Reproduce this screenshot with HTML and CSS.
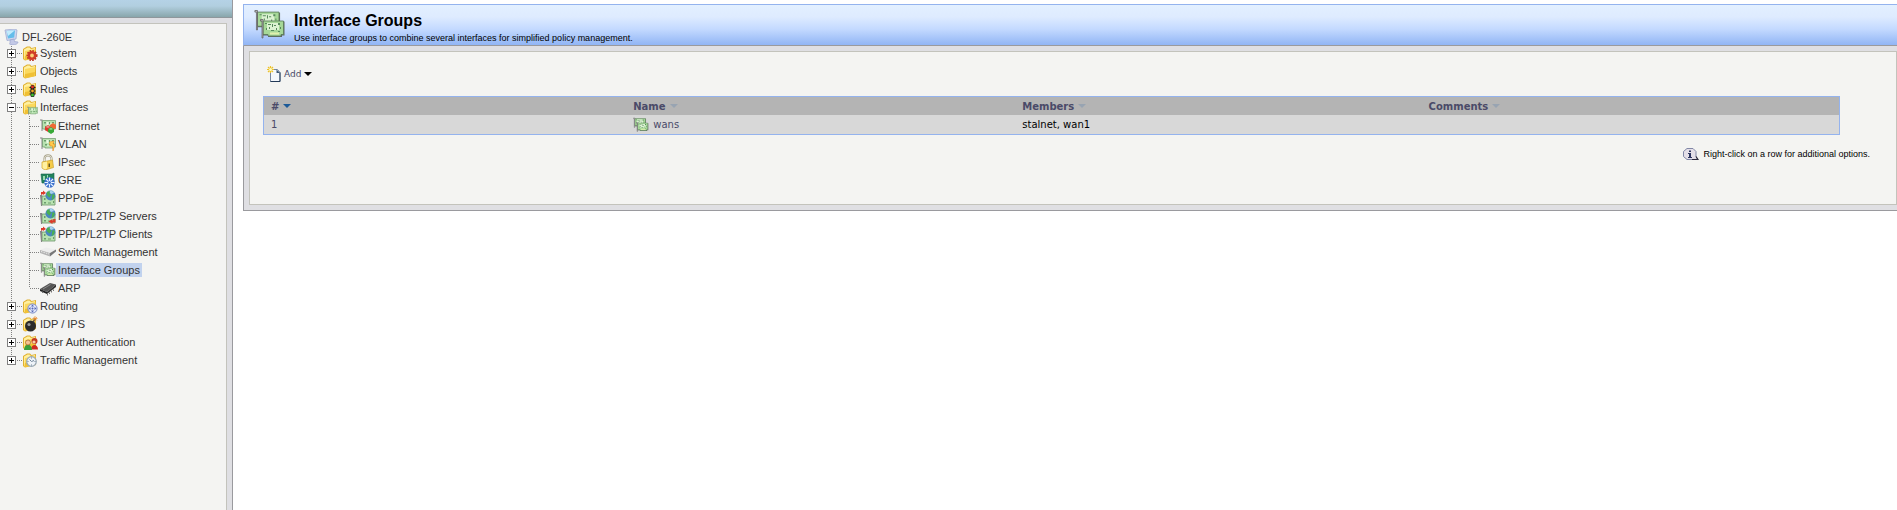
FILE: index.html
```html
<!DOCTYPE html>
<html lang="en">
<head>
    <meta charset="UTF-8">
    <meta name="viewport" content="width=device-width, initial-scale=1.0">
    <title>DFL-260E - Interface Groups</title>
    <link rel="stylesheet" href="styles.css">
</head>
<body>
    <!-- icon sprite -->
    <svg class="sprite" aria-hidden="true">
        <defs>
            <symbol id="folder" viewBox="0 0 16 16">
                <path d="M1 4l4-2.500h3L9.500 3l4.500-1v11L3 15.500 1 14z" fill="#e0b030"/>
                <path d="M2 4.500l3.500-2h2L9 4l4-1v9.500L2 14z" fill="#fff0a0"/>
                <path d="M3 6l10.500-2L12.500 13 2.500 15z" fill="#fbd95e"/>
                <path d="M3 11l10-2-.5 4L2.500 15z" fill="#f0c034"/>
            </symbol>
            <symbol id="card" viewBox="0 0 16 12">
                <path d="M0 0.500h2.500V12H1.500V1.500H0z" fill="#858585"/>
                <path d="M2.500 1.500h13v8.500H13v1H5v-1H2.500z" fill="#b8e2b0" stroke="#6a9468" stroke-width="0.700"/>
                <path d="M4 3h2v1.500H4zM9 3h1v2H9zM12 3h2v1h-2zM5 7h2v1.500H5zM9 7h3v1H9zM13 6h1v2h-1z" fill="#6a9c6c"/>
                <path d="M6.500 3h2v3h-2zM10.500 4h1v2h-1zM7.500 8h1v1h-1z" fill="#ecf8e6"/>
            </symbol>
            <!-- larger card, for the stacked groups icon -->
            <symbol id="board" viewBox="0 0 26 20">
                <path d="M3 2.500h21.500v14H22V18H8v-1.500H3z" fill="#606860"/>
                <path d="M3 2h20.500v13.500H21V17H8v-1.500H3z" fill="#a6d898" stroke="#587858" stroke-width="0.800"/>
                <path d="M7 4h12v7H7z" fill="#dcf2d2"/>
                <path d="M5 4h2v1H5zM8 5h3v1H8zM9 8h1v2H9zM12 5h1v3h-1zM14 6h2v1h-2zM18 4h2v2h-2zM6 9h1v2H6zM11 11h3v1h-3zM16 9h1v2h-1zM18 12h2v1h-2zM20 8h1v2h-1z" fill="#588a5c"/>
                <path d="M10 13.500h9v2h-9z" fill="#e0f0ae"/>
                <path d="M0.500 0.500H3v18.500H2V2H0.500z" fill="#bdbdbd" stroke="#5c5c5c" stroke-width="0.700"/>
            </symbol>
            <symbol id="groups" viewBox="0 0 32 32">
                <use href="#board" x="0" y="1" width="28" height="21"/>
                <use href="#board" x="6" y="10" width="26" height="20"/>
            </symbol>
            <symbol id="device" viewBox="0 0 16 16">
                <path d="M1 1l10-1 2 1-1 9-9 1.500z" fill="#cfd6ee" stroke="#9aa6cf" stroke-width="0.700"/>
                <path d="M2.500 2L11 1.200l-.8 7.300L4 9.500z" fill="#64bdea"/>
                <path d="M2.500 2L11 1.200 4 7z" fill="#c2ebfc"/>
                <path d="M6 11l4-1 .5 2.500L14 13c0 2-3 3-6 3-2 0-3-1-2-2z" fill="#c3c9e6" stroke="#949dc7" stroke-width="0.600"/>
            </symbol>
            <symbol id="system" viewBox="0 0 16 16">
                <use href="#folder" width="16" height="16"/>
                <circle cx="10" cy="10.500" r="4.800" fill="none" stroke="#b82c1e" stroke-width="1.500" stroke-dasharray="1.600 1.200"/>
                <circle cx="10" cy="10.500" r="3.200" fill="#fbd075" stroke="#d03c28" stroke-width="2.600"/>
            </symbol>
            <symbol id="rules" viewBox="0 0 16 16">
                <use href="#folder" width="16" height="16"/>
                <path d="M7.500 6.500h6M7.500 10h6M7.500 13h6" stroke="#222" stroke-width="1.200"/>
                <rect x="8.500" y="4" width="4" height="12" rx="1.500" fill="#202020"/>
                <circle cx="10.500" cy="6" r="1.400" fill="#f03020"/>
                <circle cx="10.500" cy="10" r="1.400" fill="#f2a51e"/>
                <circle cx="10.500" cy="14" r="1.400" fill="#39c12c"/>
            </symbol>
            <symbol id="interfaces" viewBox="0 0 16 16">
                <use href="#folder" width="16" height="16"/>
                <use href="#card" x="5" y="7" width="11" height="9"/>
            </symbol>
            <symbol id="ethernet" viewBox="0 0 16 16">
                <use href="#card" y="1" width="16" height="12"/>
                <path d="M5 9l3-2 3 2v3l-3 2-3-2z" fill="#e2382b"/>
                <path d="M10 7l3-2 3 2v3l-3 2-3-2z" fill="#ee6a35"/>
                <path d="M8 11l3-2 3 2v3l-3 2-3-2z" fill="#37a936"/>
                <path d="M5.500 9L8 7.500 10 9 8 10zM8.500 11L11 9.800l2 1.200-2 1z" fill="#fff" opacity="0.450"/>
            </symbol>
            <symbol id="vlan" viewBox="0 0 16 16">
                <use href="#card" y="1" width="16" height="12"/>
                <path d="M9.500 6l4.500-1-1 3h2l-2 7-.5-5H10z" fill="#ffcb4a" stroke="#e28a20" stroke-width="0.600"/>
            </symbol>
            <symbol id="lock" viewBox="0 0 16 16">
                <path d="M4.500 8V4.500C5 0.500 10.500 0.500 11.500 4v4" fill="none" stroke="#a9a48c" stroke-width="2.200"/>
                <path d="M4.500 8V4.500C5 0.500 10.500 0.500 11.500 4v4" fill="none" stroke="#e6e4da" stroke-width="0.900"/>
                <path d="M2 8l10.500-2 1 7.500L5 16l-3-2z" fill="#f6cb48" stroke="#c99d28" stroke-width="0.700"/>
                <path d="M2.500 8.500L7 7.500v7l-2 1-2.500-1.500z" fill="#fff0a0"/>
                <path d="M8.500 9.500H10V13H8.500z" fill="#69551c"/>
            </symbol>
            <symbol id="gre" viewBox="0 0 16 16">
                <path d="M1 2h11l2-1v9h-2v1H2z" fill="#23835a" stroke="#15624b" stroke-width="0.600"/>
                <path d="M3 4h2v4H3zM7 3h1v3H7z" fill="#9ad9b0"/>
                <circle cx="9.500" cy="10.500" r="5.200" fill="#3d72cc"/>
                <path d="M9.500 5.500v10M4.500 10.500h10M6 7l7 7M13 7l-7 7" stroke="#e7f0ff" stroke-width="1.100"/>
                <circle cx="9.500" cy="10.500" r="1.500" fill="#3d72cc"/>
            </symbol>
            <symbol id="tunnel" viewBox="0 0 16 16">
                <path d="M2 6h13v9H2z" fill="#b8e2b0" stroke="#6a9468" stroke-width="0.800"/>
                <path d="M0 5h2v11H1z" fill="#858585"/>
                <path d="M4 12h2v1.500H4zM8 12.500h3v1H8zM4 8h1.500v2H4zM13 11h1v2h-1z" fill="#6a9c6c"/>
                <circle cx="10.500" cy="5.500" r="5" fill="#4a86c0"/>
                <path d="M8 1c3-1 5 0 6 2l-3 1z" fill="#a8d2ee"/>
                <path d="M7 2l3-1-.5 2.500 2 1-2 3-3-2.500zM12.500 4l2.500 1-1.500 4-2 1z" fill="#4aaf52"/>
            </symbol>
            <symbol id="pppoe" viewBox="0 0 16 16">
                <use href="#tunnel" width="16" height="16"/>
                <path d="M1 5V2h2V0.500L6 3 3 5V4z" fill="#dd3b2b"/>
            </symbol>
            <symbol id="l2tp-server" viewBox="0 0 16 16">
                <use href="#tunnel" width="16" height="16"/>
                <path d="M15.500 11v3.500h-3V16l-4-2.500 4-2.500v1.500h1V11z" fill="#dd3b2b"/>
            </symbol>
            <symbol id="switch" viewBox="0 0 16 16">
                <path d="M0 6l6-2.500 10 2L10 9z" fill="#ededed"/>
                <path d="M0 6l10 3v3.500L0 9z" fill="#b2b2b2"/>
                <path d="M10 9l6-3.500v2L10 12.500z" fill="#777"/>
                <path d="M1 7.500l8 2.500" stroke="#f8f8f8" stroke-width="0.800" stroke-dasharray="1.500 1"/>
            </symbol>
            <symbol id="chip" viewBox="0 0 16 16">
                <path d="M0 9l10-6 6 1.500L7 12z" fill="#555"/>
                <path d="M0 9l7 3v2L0 11z" fill="#222"/>
                <path d="M7 12l9-7.500V7L7 14z" fill="#333"/>
                <path d="M7.500 14v1.500M9.500 12.500V14M11.500 11v1.500M13.500 9.500V11M2.500 11.500V13" stroke="#777"/>
                <path d="M3 9l7.500-4.500" stroke="#999" stroke-width="0.800"/>
            </symbol>
            <symbol id="routing" viewBox="0 0 16 16">
                <use href="#folder" width="16" height="16"/>
                <circle cx="10.500" cy="10.500" r="4.600" fill="#dfe5fa" stroke="#7c8cc8"/>
                <path d="M10.500 6.500l1.500 2H9zM10.500 14.500l1.500-2H9zM6.500 10.500l2-1.500v3zM14.500 10.500l-2-1.500v3z" fill="#5366b4"/>
                <circle cx="10.500" cy="10.500" r="1" fill="#5366b4"/>
            </symbol>
            <symbol id="idp" viewBox="0 0 16 16">
                <use href="#folder" width="16" height="16"/>
                <circle cx="8.500" cy="10" r="5.500" fill="#2b2b2b"/>
                <circle cx="7" cy="8.500" r="1.600" fill="#999"/>
                <path d="M11 6l2-3" stroke="#444" stroke-width="1.500"/>
                <path d="M13 0v5M10.500 2.500h5M11.500 1l3.500 3.500M15 1l-3.500 3.500" stroke="#ea8a2e" stroke-width="0.700"/>
            </symbol>
            <symbol id="users" viewBox="0 0 16 16">
                <use href="#folder" width="16" height="16"/>
                <path d="M9 15.500c0-6 7-6 7 0z" fill="#cf2a22"/>
                <circle cx="12.500" cy="7" r="3" fill="#c33824"/>
                <circle cx="12" cy="8" r="1.600" fill="#f7cfa6"/>
                <path d="M2 16c0-7 8-7 8 0z" fill="#39a03a"/>
                <circle cx="6" cy="8.500" r="2.500" fill="#f4c391" stroke="#a0622c" stroke-width="0.700"/>
            </symbol>
            <symbol id="traffic" viewBox="0 0 16 16">
                <use href="#folder" width="16" height="16"/>
                <circle cx="9.500" cy="9.500" r="4.800" fill="#eef3f8" stroke="#98a8b4" stroke-width="1.200"/>
                <path d="M7.500 7.500l2 2 2.500-1M9.500 5.500v1M9.500 12.500v1M5.500 9.500h1M12.500 9.500h1" fill="none" stroke="#647a90" stroke-width="0.900"/>
            </symbol>
            <symbol id="new-page" viewBox="0 0 14 16">
                <path d="M3.500 3.500h7l2.500 3v9H3.500z" fill="#f4f7fc" stroke="#7888a0"/>
                <path d="M9.500 3.500V7H13z" fill="#3d5878"/>
                <path d="M13 6.500v9H3.500" fill="none" stroke="#233a58"/>
                <path d="M3.500 0v7M0 3.500h7M1 1l5 5M6 1L1 6" stroke="#edc22c" stroke-width="1.200"/>
                <circle cx="3.500" cy="3.500" r="1.500" fill="#fffbc0"/>
            </symbol>
            <symbol id="hint" viewBox="0 0 16 13">
                <path d="M4 0.500h6l3 3v5l1.500 3H4l-3.500-3v-5z" fill="#e4dfe8" stroke="#8187a6"/>
                <path d="M9 11.500h6L13 8.500" fill="none" stroke="#2d2a3c" stroke-width="1.200"/>
                <path d="M6 2.500h2V4H6zM5 5h3v4h1v1H5V9h1V6H5z" fill="#2c3560"/>
            </symbol>
        </defs>
    </svg>

    <div class="page">
        <aside class="sidebar">
            <div class="topbar"></div>
            <nav class="nav">
                <a class="root" href="#"><svg class="icon"><use href="#device"/></svg><span class="label">DFL-260E</span></a>
                <ul class="tree">
                    <li>
                        <div class="row"><button class="toggle" aria-label="Expand System"></button><span class="dots"></span><a href="#"><svg class="icon"><use href="#system"/></svg><span class="label">System</span></a></div>
                    </li>
                    <li>
                        <div class="row"><button class="toggle" aria-label="Expand Objects"></button><span class="dots"></span><a href="#"><svg class="icon"><use href="#folder"/></svg><span class="label">Objects</span></a></div>
                    </li>
                    <li>
                        <div class="row"><button class="toggle" aria-label="Expand Rules"></button><span class="dots"></span><a href="#"><svg class="icon"><use href="#rules"/></svg><span class="label">Rules</span></a></div>
                    </li>
                    <li>
                        <div class="row"><button class="toggle open" aria-label="Collapse Interfaces"></button><span class="dots"></span><a href="#"><svg class="icon"><use href="#interfaces"/></svg><span class="label">Interfaces</span></a></div>
                        <ul class="subtree">
                            <li class="row"><span class="dots"></span><a href="#"><svg class="icon"><use href="#ethernet"/></svg><span class="label">Ethernet</span></a></li>
                            <li class="row"><span class="dots"></span><a href="#"><svg class="icon"><use href="#vlan"/></svg><span class="label">VLAN</span></a></li>
                            <li class="row"><span class="dots"></span><a href="#"><svg class="icon"><use href="#lock"/></svg><span class="label">IPsec</span></a></li>
                            <li class="row"><span class="dots"></span><a href="#"><svg class="icon"><use href="#gre"/></svg><span class="label">GRE</span></a></li>
                            <li class="row"><span class="dots"></span><a href="#"><svg class="icon"><use href="#pppoe"/></svg><span class="label">PPPoE</span></a></li>
                            <li class="row"><span class="dots"></span><a href="#"><svg class="icon"><use href="#l2tp-server"/></svg><span class="label">PPTP/L2TP Servers</span></a></li>
                            <li class="row"><span class="dots"></span><a href="#"><svg class="icon"><use href="#pppoe"/></svg><span class="label">PPTP/L2TP Clients</span></a></li>
                            <li class="row"><span class="dots"></span><a href="#"><svg class="icon"><use href="#switch"/></svg><span class="label">Switch Management</span></a></li>
                            <li class="row"><span class="dots"></span><a href="#"><svg class="icon"><use href="#groups"/></svg><span class="label selected">Interface Groups</span></a></li>
                            <li class="row"><span class="dots"></span><a href="#"><svg class="icon"><use href="#chip"/></svg><span class="label">ARP</span></a></li>
                        </ul>
                    </li>
                    <li>
                        <div class="row"><button class="toggle" aria-label="Expand Routing"></button><span class="dots"></span><a href="#"><svg class="icon"><use href="#routing"/></svg><span class="label">Routing</span></a></div>
                    </li>
                    <li>
                        <div class="row"><button class="toggle" aria-label="Expand IDP / IPS"></button><span class="dots"></span><a href="#"><svg class="icon"><use href="#idp"/></svg><span class="label">IDP / IPS</span></a></div>
                    </li>
                    <li>
                        <div class="row"><button class="toggle" aria-label="Expand User Authentication"></button><span class="dots"></span><a href="#"><svg class="icon"><use href="#users"/></svg><span class="label">User Authentication</span></a></div>
                    </li>
                    <li>
                        <div class="row"><button class="toggle" aria-label="Expand Traffic Management"></button><span class="dots"></span><a href="#"><svg class="icon"><use href="#traffic"/></svg><span class="label">Traffic Management</span></a></div>
                    </li>
                </ul>
            </nav>
        </aside>

        <main class="main">
            <header class="header">
                <svg class="header-icon"><use href="#groups"/></svg>
                <div>
                    <h1>Interface Groups</h1>
                    <p>Use interface groups to combine several interfaces for simplified policy management.</p>
                </div>
            </header>
            <div class="frame">
                <section class="panel">
                    <button class="add"><svg class="add-icon"><use href="#new-page"/></svg>Add<span class="arrow"></span></button>
                    <table class="grid">
                        <thead>
                            <tr>
                                <th class="col-index"><button class="sort active">#</button></th>
                                <th class="col-name"><button class="sort">Name</button></th>
                                <th class="col-members"><button class="sort">Members</button></th>
                                <th><button class="sort">Comments</button></th>
                            </tr>
                        </thead>
                        <tbody>
                            <tr>
                                <td>1</td>
                                <td><a class="item" href="#"><svg class="icon"><use href="#groups"/></svg>wans</a></td>
                                <td class="members">stalnet, wan1</td>
                                <td></td>
                            </tr>
                        </tbody>
                    </table>
                    <p class="hint"><svg class="hint-icon"><use href="#hint"/></svg>Right-click on a row for additional options.</p>
                </section>
            </div>
        </main>
    </div>
</body>
</html>
```

FILE: styles.css
```css
* {
    box-sizing: border-box;
}

body {
    margin: 0;
    background: #fff;
    color: #333;
    font-family: "Liberation Sans", Arial, sans-serif;
    font-size: 11px;
}

a {
    color: inherit;
    text-decoration: none;
}

button {
    padding: 0;
    border: none;
    background: none;
    color: inherit;
    font: inherit;
    cursor: pointer;
}

.sprite {
    display: none;
}

.icon {
    flex: none;
    width: 16px;
    height: 16px;
}

.page {
    display: flex;
    min-height: 100vh;
}

/* sidebar */
.sidebar {
    display: flex;
    flex-direction: column;
    flex: none;
    width: 233px;
    padding-right: 5px;
    border-right: 1px solid #9a9a9e;
    background: #dfdfe3;
}

.topbar {
    height: 18px;
    margin: 0 -5px 5px 0;
    border-bottom: 1px solid #8f979b;
    background: linear-gradient(#b5d2e6 0%, #b2cfe0 35%, #88a6ab 100%);
}

.nav {
    flex: 1;
    padding-top: 5px;
    border-top: 1px solid #c3c3bc;
    border-right: 1px solid #c3c3bc;
    background: #f4f4f2;
}

.root {
    display: flex;
    align-items: center;
    height: 15px;
    padding-left: 4px;
}

.tree,
.subtree {
    margin: 0;
    padding: 0;
    list-style: none;
    background: repeating-linear-gradient(#808080 0 1px, transparent 1px 2px) no-repeat;
}

.tree {
    background-position: 11px 0;
    background-size: 1px calc(100% - 9px);
}

.subtree {
    padding: 1px 0 0 29px;
    background-position: 29px 0;
    background-size: 1px calc(100% - 9px);
}

.row {
    display: flex;
    align-items: center;
    height: 18px;
}

.tree > li > .row {
    padding-left: 7px;
}

.row a {
    display: flex;
    align-items: center;
}

.dots {
    width: 6px;
    height: 1px;
    background: repeating-linear-gradient(to right, transparent 0 1px, #808080 1px 2px);
}

.subtree .dots {
    width: 11px;
}

.toggle {
    width: 9px;
    height: 9px;
    border: 1px solid #808080;
    background:
        linear-gradient(#000, #000) center / 5px 1px no-repeat,
        linear-gradient(#000, #000) center / 1px 5px no-repeat,
        #fff;
}

.toggle.open {
    background: linear-gradient(#000, #000) center / 5px 1px no-repeat, #fff;
}

.label {
    padding: 0 2px;
    line-height: 14px;
}

.selected {
    background: #c1d2ee;
}

/* content */
.main {
    flex: 1;
    align-self: flex-start;
    margin: 4px 0 0 10px;
    border-bottom: 1px solid #9a9a9e;
    background: #dfdfe3;
}

.header {
    display: flex;
    gap: 8px;
    height: 42px;
    padding: 4px 10px 0;
    border-top: 1px solid #94b3ee;
    border-left: 1px solid #94b3ee;
    border-bottom: 1px solid #9a9a9e;
    background: linear-gradient(#e3f0ff 0%, #deebff 30%, #c4daff 60%, #91b5f5 100%);
    color: #000;
}

.header-icon {
    flex: none;
    width: 32px;
    height: 32px;
}

.header h1 {
    margin: 0;
    font-size: 16px;
    line-height: 24px;
}

.header p {
    margin: 0;
    font-size: 9px;
    line-height: 10px;
}

.frame {
    padding: 5px 0 5px 5px;
    border-left: 1px solid #9a9a9e;
}

.panel {
    padding: 14px 0 43px 13px;
    border: 1px solid #c3c3bc;
    background: #f4f4f2;
}

.add {
    display: flex;
    align-items: center;
    gap: 3px;
    margin: 0 0 14px 4px;
    color: #4a4a68;
    font-family: "DejaVu Sans", Verdana, sans-serif;
    font-size: 9px;
    line-height: 14px;
}

.add-icon {
    width: 14px;
    height: 16px;
}

.arrow {
    border: 4px solid transparent;
    border-top-color: #000;
    border-bottom: none;
}

.grid {
    width: calc(100% - 56px);
    border: 1px solid #94b3ee;
    border-collapse: separate;
    border-spacing: 0;
    table-layout: fixed;
    background: #d8d8d8;
    color: #4a4a68;
    font-family: "DejaVu Sans", Verdana, sans-serif;
    font-size: 10px;
}

.grid th,
.grid td {
    padding: 0 7px;
    text-align: left;
}

.grid th {
    height: 18px;
    background: #b4b4b4;
}

.grid td {
    height: 19px;
}

.col-index {
    width: 23%;
}

.col-name {
    width: 24.7%;
}

.col-members {
    width: 25.8%;
}

.sort {
    display: flex;
    align-items: center;
    gap: 4px;
}

.sort::after {
    content: "";
    border: 4px solid transparent;
    border-top-color: #98a4b2;
    border-bottom: none;
}

.sort.active::after {
    border-top-color: #1c5a98;
}

.item {
    display: flex;
    align-items: center;
    gap: 4px;
}

.grid .members {
    color: #000;
}

.hint {
    display: flex;
    align-items: center;
    justify-content: flex-end;
    gap: 4px;
    margin: 12px 26px 0 0;
    color: #000;
    font-size: 9px;
    line-height: 14px;
}

.hint-icon {
    width: 16px;
    height: 13px;
}
```
